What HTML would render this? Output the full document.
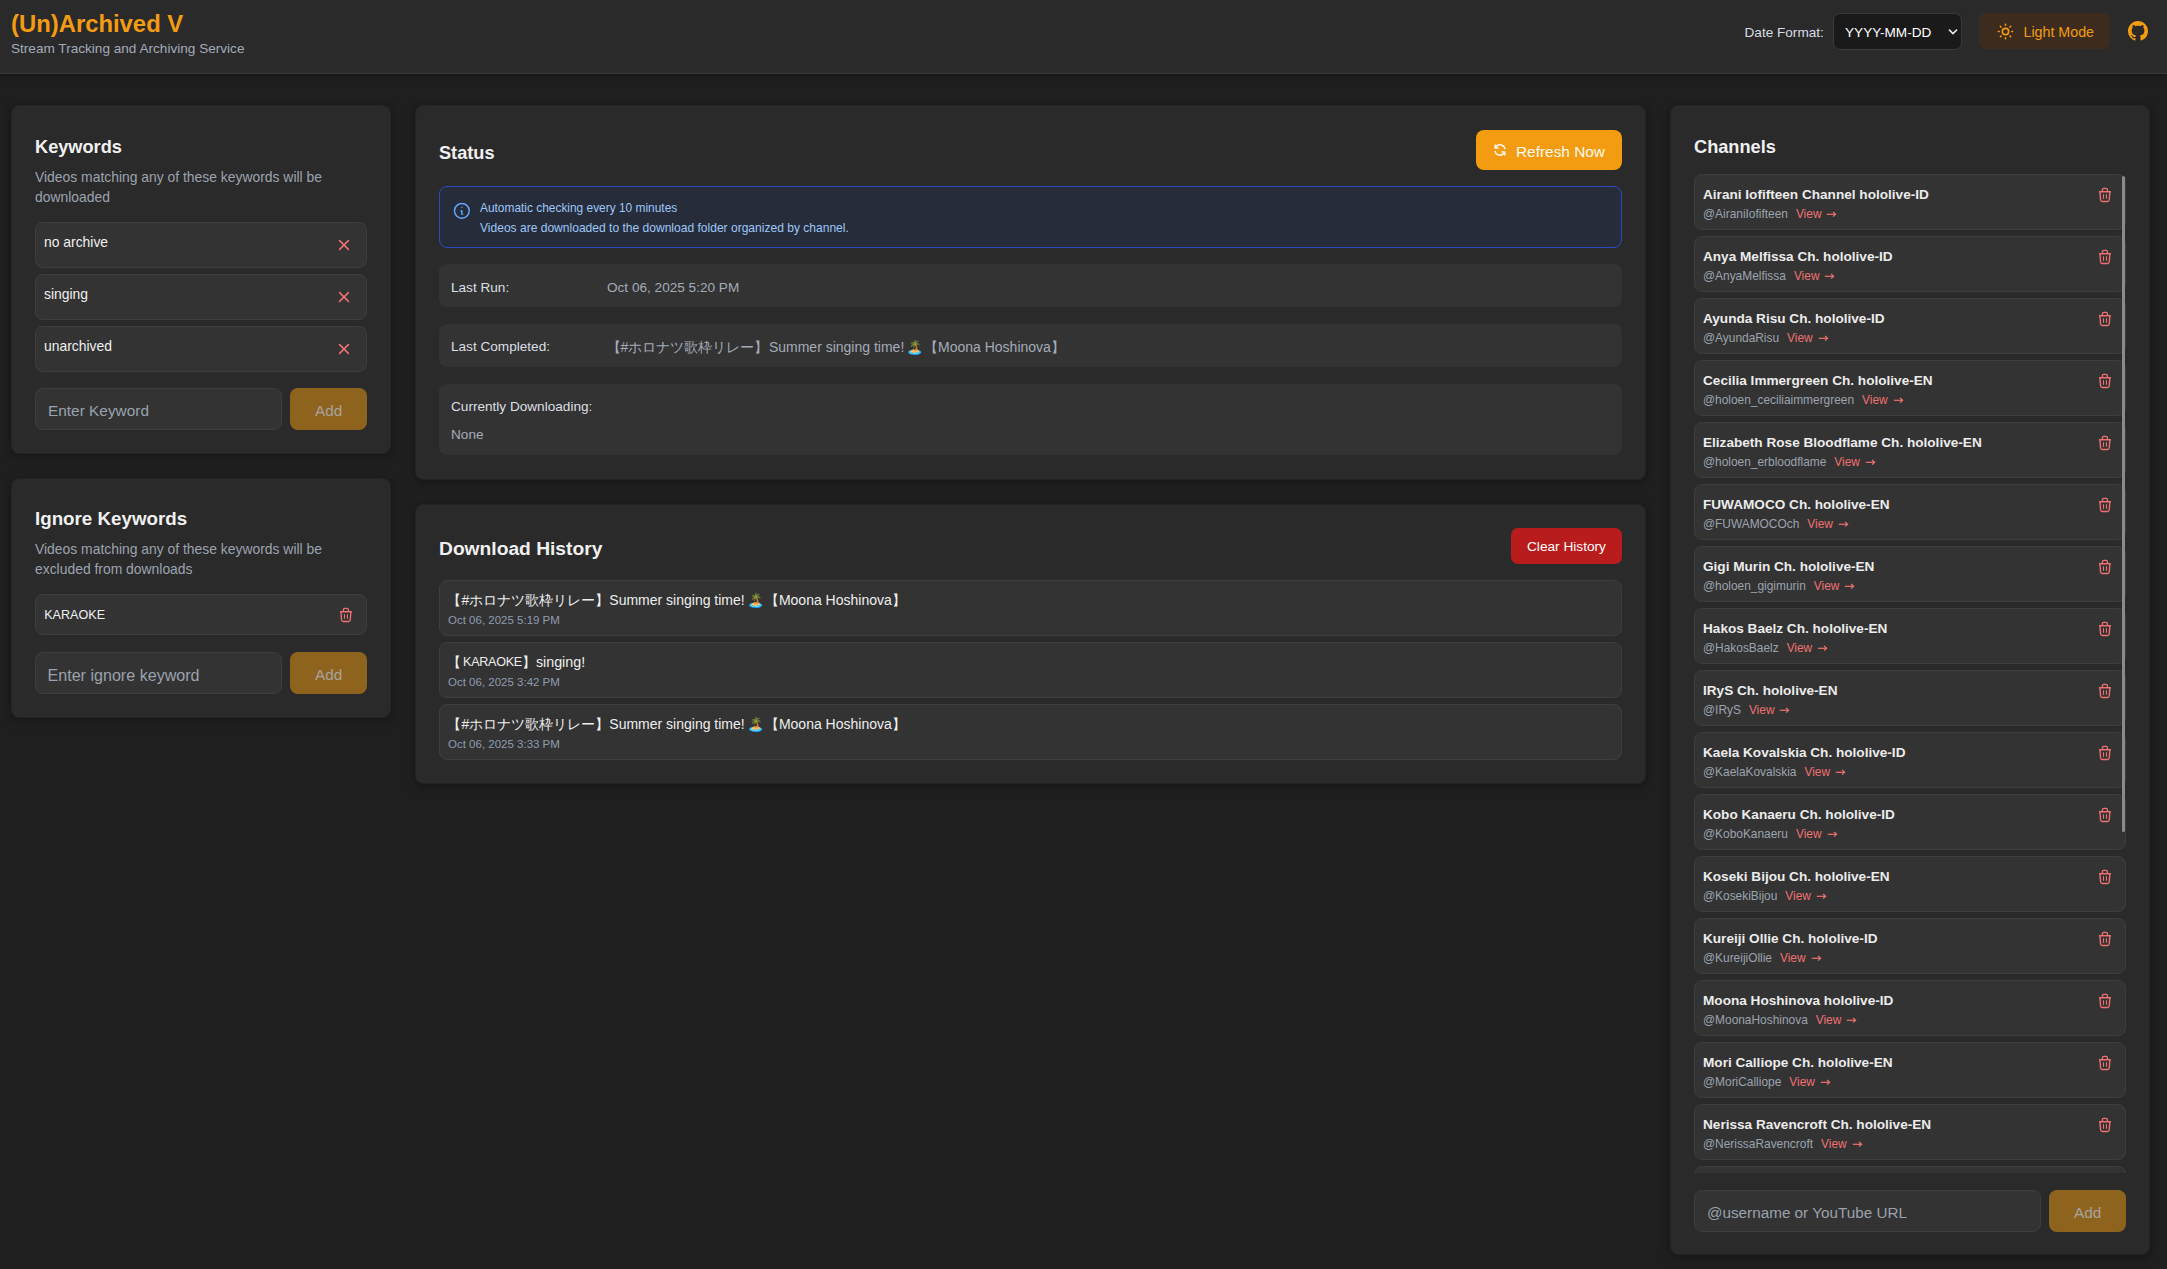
<!DOCTYPE html>
<html><head><meta charset="utf-8"><title>(Un)Archived V</title>
<style>
html,body{margin:0;padding:0;}
body{width:2167px;height:1269px;overflow:hidden;background:#1f1f1f;position:relative;font-family:"Liberation Sans", sans-serif;}
.t{position:absolute;white-space:nowrap;}
.ib{display:inline-block;overflow:hidden;vertical-align:top;white-space:nowrap;}
</style></head><body>
<div style="position:absolute;left:0px;top:0px;width:2167px;height:74px;box-sizing:border-box;background:#2a2a2a;border-bottom:1px solid #3a3a3a;box-shadow:0 2px 4px rgba(0,0,0,0.35);"></div>
<div class="t" style="left:11.0px;top:12.11px;font-size:23.85px;line-height:23.85px;color:#f39c12;font-weight:bold;">(Un)Archived V</div>
<div class="t" style="left:11.0px;top:42.19px;font-size:13.6px;line-height:13.6px;color:#a3abb8;font-weight:normal;">Stream Tracking and Archiving Service</div>
<div class="t" style="left:1744.5px;top:26.49px;font-size:13.6px;line-height:13.6px;color:#d8dce2;font-weight:normal;">Date Format:</div>
<div style="position:absolute;left:1833px;top:13px;width:129px;height:37px;box-sizing:border-box;background:#1a1a1a;border:1px solid #3a3a3a;border-radius:7px;"></div>
<div class="t" style="left:1845.0px;top:26.49px;font-size:13.6px;line-height:13.6px;color:#ffffff;font-weight:normal;">YYYY-MM-DD</div>
<svg style="position:absolute;left:1947px;top:28px" width="12" height="8" viewBox="0 0 12 8"><path d="M2 1.6L6 5.6L10 1.6" stroke="#e8e8e8" stroke-width="1.6" fill="none"/></svg>
<div style="position:absolute;left:1979px;top:13px;width:131px;height:36px;box-sizing:border-box;background:#3d2c1e;border-radius:7px;"></div>
<svg style="position:absolute;left:1995.5px;top:21.5px" width="19" height="19" viewBox="0 0 24 24" fill="none" stroke="#f39c12" stroke-width="2" stroke-linecap="round"><circle cx="12" cy="12" r="4"/><path d="M3 12h1m8-9v1m8 8h1m-9 8v1m-6.4-15.4l.7.7m12.1-.7l-.7.7m0 11.4l.7.7m-12.1-.7l-.7.7"/></svg>
<div class="t" style="left:2023.5px;top:25.44px;font-size:14.25px;line-height:14.25px;color:#f39c12;font-weight:normal;">Light Mode</div>
<svg style="position:absolute;left:2128px;top:21px" width="20" height="20" viewBox="0 0 16 16"><path fill="#f39c12" d="M8 0C3.58 0 0 3.58 0 8c0 3.54 2.29 6.53 5.47 7.59.4.07.55-.17.55-.38 0-.19-.01-.82-.01-1.49-2.01.37-2.53-.49-2.69-.94-.09-.23-.48-.94-.82-1.13-.28-.15-.68-.52-.01-.53.63-.01 1.08.58 1.23.82.72 1.21 1.87.87 2.33.66.07-.52.28-.87.51-1.07-1.78-.2-3.64-.89-3.64-3.95 0-.87.31-1.59.82-2.15-.08-.2-.36-1.02.08-2.12 0 0 .67-.21 2.2.82.64-.18 1.32-.27 2-.27.68 0 1.36.09 2 .27 1.53-1.04 2.2-.82 2.2-.82.44 1.1.16 1.92.08 2.12.51.56.82 1.27.82 2.15 0 3.07-1.87 3.75-3.65 3.95.29.25.54.73.54 1.48 0 1.07-.01 1.93-.01 2.2 0 .21.15.46.55.38A8.013 8.013 0 0016 8c0-4.42-3.58-8-8-8z"/></svg>
<div style="position:absolute;left:11px;top:105px;width:380px;height:349px;box-sizing:border-box;background:#2a2a2a;border:1px solid #242424;border-radius:8px;box-shadow:0 2px 8px rgba(0,0,0,0.35);"></div>
<div class="t" style="left:35.0px;top:138.09px;font-size:18.2px;line-height:18.2px;color:#f0f0f0;font-weight:bold;">Keywords</div>
<div class="t" style="left:35.0px;top:170.83px;font-size:13.9px;line-height:13.9px;color:#9ca3af;font-weight:normal;">Videos matching any of these keywords will be</div>
<div class="t" style="left:35.0px;top:190.73px;font-size:13.9px;line-height:13.9px;color:#9ca3af;font-weight:normal;">downloaded</div>
<div style="position:absolute;left:35px;top:222px;width:332px;height:46px;box-sizing:border-box;background:#333333;border:1px solid #3e3e3e;border-radius:8px;"></div>
<div class="t" style="left:44.0px;top:236.03px;font-size:13.9px;line-height:13.9px;color:#f0f0f0;font-weight:normal;">no archive</div>
<svg style="position:absolute;left:338px;top:238.8px" width="12" height="12" viewBox="0 0 12 12"><path d="M1.6 1.6L10.4 10.4M10.4 1.6L1.6 10.4" stroke="#f07171" stroke-width="1.5" fill="none" stroke-linecap="round"/></svg>
<div style="position:absolute;left:35px;top:274px;width:332px;height:46px;box-sizing:border-box;background:#333333;border:1px solid #3e3e3e;border-radius:8px;"></div>
<div class="t" style="left:44.0px;top:288.03px;font-size:13.9px;line-height:13.9px;color:#f0f0f0;font-weight:normal;">singing</div>
<svg style="position:absolute;left:338px;top:290.8px" width="12" height="12" viewBox="0 0 12 12"><path d="M1.6 1.6L10.4 10.4M10.4 1.6L1.6 10.4" stroke="#f07171" stroke-width="1.5" fill="none" stroke-linecap="round"/></svg>
<div style="position:absolute;left:35px;top:326px;width:332px;height:46px;box-sizing:border-box;background:#333333;border:1px solid #3e3e3e;border-radius:8px;"></div>
<div class="t" style="left:44.0px;top:340.03px;font-size:13.9px;line-height:13.9px;color:#f0f0f0;font-weight:normal;">unarchived</div>
<svg style="position:absolute;left:338px;top:342.8px" width="12" height="12" viewBox="0 0 12 12"><path d="M1.6 1.6L10.4 10.4M10.4 1.6L1.6 10.4" stroke="#f07171" stroke-width="1.5" fill="none" stroke-linecap="round"/></svg>
<div style="position:absolute;left:35px;top:388px;width:247px;height:42px;box-sizing:border-box;background:#333333;border:1px solid #3e3e3e;border-radius:8px;"></div>
<div class="t" style="left:48.0px;top:403.06px;font-size:15.4px;line-height:15.4px;color:#9aa2ad;font-weight:normal;">Enter Keyword</div>
<div style="position:absolute;left:290px;top:388px;width:77px;height:42px;box-sizing:border-box;background:#8e631e;border-radius:8px;"></div>
<div class="t" style="left:315.0px;top:402.86px;font-size:15.4px;line-height:15.4px;color:#a8a49c;font-weight:normal;">Add</div>
<div style="position:absolute;left:11px;top:478px;width:380px;height:240px;box-sizing:border-box;background:#2a2a2a;border:1px solid #242424;border-radius:8px;box-shadow:0 2px 8px rgba(0,0,0,0.35);"></div>
<div class="t" style="left:35.0px;top:509.72px;font-size:18.76px;line-height:18.76px;color:#f0f0f0;font-weight:bold;">Ignore Keywords</div>
<div class="t" style="left:35.0px;top:543.43px;font-size:13.9px;line-height:13.9px;color:#9ca3af;font-weight:normal;">Videos matching any of these keywords will be</div>
<div class="t" style="left:35.0px;top:563.03px;font-size:13.9px;line-height:13.9px;color:#9ca3af;font-weight:normal;">excluded from downloads</div>
<div style="position:absolute;left:35px;top:594px;width:332px;height:41px;box-sizing:border-box;background:#333333;border:1px solid #3e3e3e;border-radius:8px;"></div>
<div class="t" style="left:44.2px;top:608.63px;font-size:12.6px;line-height:12.6px;color:#f0f0f0;font-weight:normal;">KARAOKE</div>
<svg style="position:absolute;left:336px;top:604px" width="20" height="22" viewBox="0 0 20 22"><path d="M7.45 7.2V5.6a1.3 1.3 0 0 1 1.3-1.3h2.3a1.3 1.3 0 0 1 1.3 1.3V7.2" stroke="#f07171" stroke-width="1.3" fill="none"/><path d="M4.5 7.7H15.4" stroke="#f07171" stroke-width="1.35" fill="none" stroke-linecap="round"/><path d="M4.9 7.9L5.6 16.0a1.7 1.7 0 0 0 1.7 1.5h5.2a1.7 1.7 0 0 0 1.7-1.5L14.9 7.9" stroke="#f07171" stroke-width="1.35" fill="none"/><path d="M8.5 10.2V14.8M11.45 10.2V14.8" stroke="#f07171" stroke-width="1.1" fill="none"/></svg>
<div style="position:absolute;left:35px;top:652px;width:247px;height:42px;box-sizing:border-box;background:#333333;border:1px solid #3e3e3e;border-radius:8px;"></div>
<div class="t" style="left:47.5px;top:666.97px;font-size:16.1px;line-height:16.1px;color:#9aa2ad;font-weight:normal;">Enter ignore keyword</div>
<div style="position:absolute;left:290px;top:652px;width:77px;height:42px;box-sizing:border-box;background:#8e631e;border-radius:8px;"></div>
<div class="t" style="left:315.0px;top:667.06px;font-size:15.4px;line-height:15.4px;color:#a8a49c;font-weight:normal;">Add</div>
<div style="position:absolute;left:415px;top:105px;width:1231px;height:375px;box-sizing:border-box;background:#2a2a2a;border:1px solid #242424;border-radius:8px;box-shadow:0 2px 8px rgba(0,0,0,0.35);"></div>
<div class="t" style="left:439.0px;top:143.63px;font-size:18.16px;line-height:18.16px;color:#f0f0f0;font-weight:bold;">Status</div>
<div style="position:absolute;left:1476px;top:130px;width:146px;height:40px;box-sizing:border-box;background:#f39c12;border-radius:8px;"></div>
<svg style="position:absolute;left:1493px;top:143px" width="14" height="14" viewBox="0 0 14 14"><path d="M12 6.2A5 5 0 0 0 2.6 4.6M2 7.8a5 5 0 0 0 9.4 1.6" stroke="#fff8ee" stroke-width="1.5" fill="none"/><path d="M2.2 1.6V5H5.6M11.8 12.4V9H8.4" stroke="#fff8ee" stroke-width="1.5" fill="none"/></svg>
<div class="t" style="left:1516.0px;top:143.96px;font-size:15.4px;line-height:15.4px;color:#fffaf0;font-weight:normal;">Refresh Now</div>
<div style="position:absolute;left:439px;top:186px;width:1183px;height:62px;box-sizing:border-box;background:#272c3b;border:1px solid #2c4ac0;border-radius:8px;"></div>
<svg style="position:absolute;left:452.05px;top:201.05px" width="19.7" height="19.7" viewBox="0 0 24 24" fill="none" stroke="#60a5fa" stroke-width="1.8" stroke-linecap="round" stroke-linejoin="round"><circle cx="12" cy="12" r="9"/><path d="M12 8h.01"/><path d="M11 12h1v4h1"/></svg>
<div class="t" style="left:480.0px;top:202.91px;font-size:11.92px;line-height:11.92px;color:#9cc7f7;font-weight:normal;">Automatic checking every 10 minutes</div>
<div class="t" style="left:480.0px;top:222.10px;font-size:12.05px;line-height:12.05px;color:#9cc7f7;font-weight:normal;">Videos are downloaded to the download folder organized by channel.</div>
<div style="position:absolute;left:439px;top:264px;width:1183px;height:43px;box-sizing:border-box;background:#333333;border-radius:8px;"></div>
<div class="t" style="left:451.0px;top:280.69px;font-size:13.6px;line-height:13.6px;color:#dcdfe4;font-weight:normal;">Last Run:</div>
<div class="t" style="left:607.0px;top:280.69px;font-size:13.6px;line-height:13.6px;color:#a3abb8;font-weight:normal;">Oct 06, 2025 5:20 PM</div>
<div style="position:absolute;left:439px;top:324px;width:1183px;height:43px;box-sizing:border-box;background:#333333;border-radius:8px;"></div>
<div class="t" style="left:451.0px;top:340.29px;font-size:13.6px;line-height:13.6px;color:#dcdfe4;font-weight:normal;">Last Completed:</div>
<div class="t" style="left:606.5px;top:339.95px;font-size:14px;line-height:14px;color:#a3abb8;">【#ホロナツ歌枠リレー】</div>
<div class="t" style="left:768.9px;top:339.95px;font-size:14px;line-height:14px;color:#a3abb8;">Summer singing time!</div>
<div class="t" style="left:905.9px;top:339.95px;font-size:14px;line-height:14px;color:#a3abb8;">🏝️</div>
<div class="t" style="left:924.0px;top:339.95px;font-size:14px;line-height:14px;color:#a3abb8;">【Moona Hoshinova】</div>
<div style="position:absolute;left:439px;top:384px;width:1183px;height:71px;box-sizing:border-box;background:#333333;border-radius:8px;"></div>
<div class="t" style="left:451.0px;top:399.89px;font-size:13.6px;line-height:13.6px;color:#dcdfe4;font-weight:normal;">Currently Downloading:</div>
<div class="t" style="left:451.0px;top:427.99px;font-size:13.6px;line-height:13.6px;color:#a3abb8;font-weight:normal;">None</div>
<div style="position:absolute;left:415px;top:504px;width:1231px;height:280px;box-sizing:border-box;background:#2a2a2a;border:1px solid #242424;border-radius:8px;box-shadow:0 2px 8px rgba(0,0,0,0.35);"></div>
<div class="t" style="left:439.0px;top:538.52px;font-size:19.23px;line-height:19.23px;color:#f0f0f0;font-weight:bold;">Download History</div>
<div style="position:absolute;left:1511px;top:528px;width:111px;height:36px;box-sizing:border-box;background:#b91c1c;border-radius:7px;"></div>
<div class="t" style="left:1527.0px;top:540.43px;font-size:13.67px;line-height:13.67px;color:#ffffff;font-weight:normal;">Clear History</div>
<div style="position:absolute;left:439px;top:580px;width:1183px;height:56px;box-sizing:border-box;background:#333333;border:1px solid #3e3e3e;border-radius:8px;"></div>
<div class="t" style="left:447.4px;top:593.25px;font-size:14px;line-height:14px;color:#eeeeee;">【#ホロナツ歌枠リレー】</div>
<div class="t" style="left:609.3px;top:593.25px;font-size:14px;line-height:14px;color:#eeeeee;">Summer singing time!</div>
<div class="t" style="left:747.1px;top:593.25px;font-size:14px;line-height:14px;color:#eeeeee;">🏝️</div>
<div class="t" style="left:764.9px;top:593.25px;font-size:14px;line-height:14px;color:#eeeeee;">【Moona Hoshinova】</div>
<div class="t" style="left:448.0px;top:614.56px;font-size:11.51px;line-height:11.51px;color:#8f9cb0;font-weight:normal;">Oct 06, 2025 5:19 PM</div>
<div style="position:absolute;left:439px;top:642px;width:1183px;height:56px;box-sizing:border-box;background:#333333;border:1px solid #3e3e3e;border-radius:8px;"></div>
<div class="t" style="left:447.0px;top:655.25px;font-size:14px;line-height:14px;color:#eeeeee;">【</div>
<div class="t" style="left:463.1px;top:656.43px;font-size:12.6px;line-height:12.6px;color:#eeeeee;font-weight:normal;letter-spacing:-0.3px">KARAOKE</div>
<div class="t" style="left:521.5px;top:655.25px;font-size:14px;line-height:14px;color:#eeeeee;">】</div>
<div class="t" style="left:535.9px;top:655.00px;font-size:14.3px;line-height:14.3px;color:#eeeeee;">singing!</div>
<div class="t" style="left:448.0px;top:676.56px;font-size:11.51px;line-height:11.51px;color:#8f9cb0;font-weight:normal;">Oct 06, 2025 3:42 PM</div>
<div style="position:absolute;left:439px;top:704px;width:1183px;height:56px;box-sizing:border-box;background:#333333;border:1px solid #3e3e3e;border-radius:8px;"></div>
<div class="t" style="left:447.4px;top:717.25px;font-size:14px;line-height:14px;color:#eeeeee;">【#ホロナツ歌枠リレー】</div>
<div class="t" style="left:609.3px;top:717.25px;font-size:14px;line-height:14px;color:#eeeeee;">Summer singing time!</div>
<div class="t" style="left:747.1px;top:717.25px;font-size:14px;line-height:14px;color:#eeeeee;">🏝️</div>
<div class="t" style="left:764.9px;top:717.25px;font-size:14px;line-height:14px;color:#eeeeee;">【Moona Hoshinova】</div>
<div class="t" style="left:448.0px;top:738.56px;font-size:11.51px;line-height:11.51px;color:#8f9cb0;font-weight:normal;">Oct 06, 2025 3:33 PM</div>
<div style="position:absolute;left:1670px;top:105px;width:480px;height:1150px;box-sizing:border-box;background:#2a2a2a;border:1px solid #242424;border-radius:8px;box-shadow:0 2px 8px rgba(0,0,0,0.35);"></div>
<div class="t" style="left:1694.0px;top:137.88px;font-size:18.22px;line-height:18.22px;color:#f0f0f0;font-weight:bold;">Channels</div>
<div style="position:absolute;left:1694px;top:174px;width:432px;height:999px;overflow:hidden;">
<div style="position:absolute;left:0;top:0px;width:432px;height:56px;box-sizing:border-box;background:#333333;border:1px solid #3e3e3e;border-radius:8px;"><div class="t" style="left:8px;top:12.69px;font-size:13.6px;line-height:13.6px;color:#ececec;font-weight:bold">Airani Iofifteen Channel hololive-ID</div><div class="t" style="left:8px;top:33.91px;font-size:11.92px;line-height:11.92px;color:#9ca3af">@AiraniIofifteen<span style="color:#f07171;margin-left:8px">View<svg style="margin-left:5px;vertical-align:baseline" width="11" height="7" viewBox="0 0 11 7"><path d="M0.8 3.3H9.3" stroke="#f07171" stroke-width="1.2"/><path d="M7.1 1.0L9.6 3.3L7.1 5.6" stroke="#f07171" stroke-width="1.2" fill="none"/></svg></span></div></div>
<div style="position:absolute;left:0;top:62px;width:432px;height:56px;box-sizing:border-box;background:#333333;border:1px solid #3e3e3e;border-radius:8px;"><div class="t" style="left:8px;top:12.69px;font-size:13.6px;line-height:13.6px;color:#ececec;font-weight:bold">Anya Melfissa Ch. hololive-ID</div><div class="t" style="left:8px;top:33.91px;font-size:11.92px;line-height:11.92px;color:#9ca3af">@AnyaMelfissa<span style="color:#f07171;margin-left:8px">View<svg style="margin-left:5px;vertical-align:baseline" width="11" height="7" viewBox="0 0 11 7"><path d="M0.8 3.3H9.3" stroke="#f07171" stroke-width="1.2"/><path d="M7.1 1.0L9.6 3.3L7.1 5.6" stroke="#f07171" stroke-width="1.2" fill="none"/></svg></span></div></div>
<div style="position:absolute;left:0;top:124px;width:432px;height:56px;box-sizing:border-box;background:#333333;border:1px solid #3e3e3e;border-radius:8px;"><div class="t" style="left:8px;top:12.69px;font-size:13.6px;line-height:13.6px;color:#ececec;font-weight:bold">Ayunda Risu Ch. hololive-ID</div><div class="t" style="left:8px;top:33.91px;font-size:11.92px;line-height:11.92px;color:#9ca3af">@AyundaRisu<span style="color:#f07171;margin-left:8px">View<svg style="margin-left:5px;vertical-align:baseline" width="11" height="7" viewBox="0 0 11 7"><path d="M0.8 3.3H9.3" stroke="#f07171" stroke-width="1.2"/><path d="M7.1 1.0L9.6 3.3L7.1 5.6" stroke="#f07171" stroke-width="1.2" fill="none"/></svg></span></div></div>
<div style="position:absolute;left:0;top:186px;width:432px;height:56px;box-sizing:border-box;background:#333333;border:1px solid #3e3e3e;border-radius:8px;"><div class="t" style="left:8px;top:12.69px;font-size:13.6px;line-height:13.6px;color:#ececec;font-weight:bold">Cecilia Immergreen Ch. hololive-EN</div><div class="t" style="left:8px;top:33.91px;font-size:11.92px;line-height:11.92px;color:#9ca3af">@holoen_ceciliaimmergreen<span style="color:#f07171;margin-left:8px">View<svg style="margin-left:5px;vertical-align:baseline" width="11" height="7" viewBox="0 0 11 7"><path d="M0.8 3.3H9.3" stroke="#f07171" stroke-width="1.2"/><path d="M7.1 1.0L9.6 3.3L7.1 5.6" stroke="#f07171" stroke-width="1.2" fill="none"/></svg></span></div></div>
<div style="position:absolute;left:0;top:248px;width:432px;height:56px;box-sizing:border-box;background:#333333;border:1px solid #3e3e3e;border-radius:8px;"><div class="t" style="left:8px;top:12.69px;font-size:13.6px;line-height:13.6px;color:#ececec;font-weight:bold">Elizabeth Rose Bloodflame Ch. hololive-EN</div><div class="t" style="left:8px;top:33.91px;font-size:11.92px;line-height:11.92px;color:#9ca3af">@holoen_erbloodflame<span style="color:#f07171;margin-left:8px">View<svg style="margin-left:5px;vertical-align:baseline" width="11" height="7" viewBox="0 0 11 7"><path d="M0.8 3.3H9.3" stroke="#f07171" stroke-width="1.2"/><path d="M7.1 1.0L9.6 3.3L7.1 5.6" stroke="#f07171" stroke-width="1.2" fill="none"/></svg></span></div></div>
<div style="position:absolute;left:0;top:310px;width:432px;height:56px;box-sizing:border-box;background:#333333;border:1px solid #3e3e3e;border-radius:8px;"><div class="t" style="left:8px;top:12.69px;font-size:13.6px;line-height:13.6px;color:#ececec;font-weight:bold">FUWAMOCO Ch. hololive-EN</div><div class="t" style="left:8px;top:33.91px;font-size:11.92px;line-height:11.92px;color:#9ca3af">@FUWAMOCOch<span style="color:#f07171;margin-left:8px">View<svg style="margin-left:5px;vertical-align:baseline" width="11" height="7" viewBox="0 0 11 7"><path d="M0.8 3.3H9.3" stroke="#f07171" stroke-width="1.2"/><path d="M7.1 1.0L9.6 3.3L7.1 5.6" stroke="#f07171" stroke-width="1.2" fill="none"/></svg></span></div></div>
<div style="position:absolute;left:0;top:372px;width:432px;height:56px;box-sizing:border-box;background:#333333;border:1px solid #3e3e3e;border-radius:8px;"><div class="t" style="left:8px;top:12.69px;font-size:13.6px;line-height:13.6px;color:#ececec;font-weight:bold">Gigi Murin Ch. hololive-EN</div><div class="t" style="left:8px;top:33.91px;font-size:11.92px;line-height:11.92px;color:#9ca3af">@holoen_gigimurin<span style="color:#f07171;margin-left:8px">View<svg style="margin-left:5px;vertical-align:baseline" width="11" height="7" viewBox="0 0 11 7"><path d="M0.8 3.3H9.3" stroke="#f07171" stroke-width="1.2"/><path d="M7.1 1.0L9.6 3.3L7.1 5.6" stroke="#f07171" stroke-width="1.2" fill="none"/></svg></span></div></div>
<div style="position:absolute;left:0;top:434px;width:432px;height:56px;box-sizing:border-box;background:#333333;border:1px solid #3e3e3e;border-radius:8px;"><div class="t" style="left:8px;top:12.69px;font-size:13.6px;line-height:13.6px;color:#ececec;font-weight:bold">Hakos Baelz Ch. hololive-EN</div><div class="t" style="left:8px;top:33.91px;font-size:11.92px;line-height:11.92px;color:#9ca3af">@HakosBaelz<span style="color:#f07171;margin-left:8px">View<svg style="margin-left:5px;vertical-align:baseline" width="11" height="7" viewBox="0 0 11 7"><path d="M0.8 3.3H9.3" stroke="#f07171" stroke-width="1.2"/><path d="M7.1 1.0L9.6 3.3L7.1 5.6" stroke="#f07171" stroke-width="1.2" fill="none"/></svg></span></div></div>
<div style="position:absolute;left:0;top:496px;width:432px;height:56px;box-sizing:border-box;background:#333333;border:1px solid #3e3e3e;border-radius:8px;"><div class="t" style="left:8px;top:12.69px;font-size:13.6px;line-height:13.6px;color:#ececec;font-weight:bold">IRyS Ch. hololive-EN</div><div class="t" style="left:8px;top:33.91px;font-size:11.92px;line-height:11.92px;color:#9ca3af">@IRyS<span style="color:#f07171;margin-left:8px">View<svg style="margin-left:5px;vertical-align:baseline" width="11" height="7" viewBox="0 0 11 7"><path d="M0.8 3.3H9.3" stroke="#f07171" stroke-width="1.2"/><path d="M7.1 1.0L9.6 3.3L7.1 5.6" stroke="#f07171" stroke-width="1.2" fill="none"/></svg></span></div></div>
<div style="position:absolute;left:0;top:558px;width:432px;height:56px;box-sizing:border-box;background:#333333;border:1px solid #3e3e3e;border-radius:8px;"><div class="t" style="left:8px;top:12.69px;font-size:13.6px;line-height:13.6px;color:#ececec;font-weight:bold">Kaela Kovalskia Ch. hololive-ID</div><div class="t" style="left:8px;top:33.91px;font-size:11.92px;line-height:11.92px;color:#9ca3af">@KaelaKovalskia<span style="color:#f07171;margin-left:8px">View<svg style="margin-left:5px;vertical-align:baseline" width="11" height="7" viewBox="0 0 11 7"><path d="M0.8 3.3H9.3" stroke="#f07171" stroke-width="1.2"/><path d="M7.1 1.0L9.6 3.3L7.1 5.6" stroke="#f07171" stroke-width="1.2" fill="none"/></svg></span></div></div>
<div style="position:absolute;left:0;top:620px;width:432px;height:56px;box-sizing:border-box;background:#333333;border:1px solid #3e3e3e;border-radius:8px;"><div class="t" style="left:8px;top:12.69px;font-size:13.6px;line-height:13.6px;color:#ececec;font-weight:bold">Kobo Kanaeru Ch. hololive-ID</div><div class="t" style="left:8px;top:33.91px;font-size:11.92px;line-height:11.92px;color:#9ca3af">@KoboKanaeru<span style="color:#f07171;margin-left:8px">View<svg style="margin-left:5px;vertical-align:baseline" width="11" height="7" viewBox="0 0 11 7"><path d="M0.8 3.3H9.3" stroke="#f07171" stroke-width="1.2"/><path d="M7.1 1.0L9.6 3.3L7.1 5.6" stroke="#f07171" stroke-width="1.2" fill="none"/></svg></span></div></div>
<div style="position:absolute;left:0;top:682px;width:432px;height:56px;box-sizing:border-box;background:#333333;border:1px solid #3e3e3e;border-radius:8px;"><div class="t" style="left:8px;top:12.69px;font-size:13.6px;line-height:13.6px;color:#ececec;font-weight:bold">Koseki Bijou Ch. hololive-EN</div><div class="t" style="left:8px;top:33.91px;font-size:11.92px;line-height:11.92px;color:#9ca3af">@KosekiBijou<span style="color:#f07171;margin-left:8px">View<svg style="margin-left:5px;vertical-align:baseline" width="11" height="7" viewBox="0 0 11 7"><path d="M0.8 3.3H9.3" stroke="#f07171" stroke-width="1.2"/><path d="M7.1 1.0L9.6 3.3L7.1 5.6" stroke="#f07171" stroke-width="1.2" fill="none"/></svg></span></div></div>
<div style="position:absolute;left:0;top:744px;width:432px;height:56px;box-sizing:border-box;background:#333333;border:1px solid #3e3e3e;border-radius:8px;"><div class="t" style="left:8px;top:12.69px;font-size:13.6px;line-height:13.6px;color:#ececec;font-weight:bold">Kureiji Ollie Ch. hololive-ID</div><div class="t" style="left:8px;top:33.91px;font-size:11.92px;line-height:11.92px;color:#9ca3af">@KureijiOllie<span style="color:#f07171;margin-left:8px">View<svg style="margin-left:5px;vertical-align:baseline" width="11" height="7" viewBox="0 0 11 7"><path d="M0.8 3.3H9.3" stroke="#f07171" stroke-width="1.2"/><path d="M7.1 1.0L9.6 3.3L7.1 5.6" stroke="#f07171" stroke-width="1.2" fill="none"/></svg></span></div></div>
<div style="position:absolute;left:0;top:806px;width:432px;height:56px;box-sizing:border-box;background:#333333;border:1px solid #3e3e3e;border-radius:8px;"><div class="t" style="left:8px;top:12.69px;font-size:13.6px;line-height:13.6px;color:#ececec;font-weight:bold">Moona Hoshinova hololive-ID</div><div class="t" style="left:8px;top:33.91px;font-size:11.92px;line-height:11.92px;color:#9ca3af">@MoonaHoshinova<span style="color:#f07171;margin-left:8px">View<svg style="margin-left:5px;vertical-align:baseline" width="11" height="7" viewBox="0 0 11 7"><path d="M0.8 3.3H9.3" stroke="#f07171" stroke-width="1.2"/><path d="M7.1 1.0L9.6 3.3L7.1 5.6" stroke="#f07171" stroke-width="1.2" fill="none"/></svg></span></div></div>
<div style="position:absolute;left:0;top:868px;width:432px;height:56px;box-sizing:border-box;background:#333333;border:1px solid #3e3e3e;border-radius:8px;"><div class="t" style="left:8px;top:12.69px;font-size:13.6px;line-height:13.6px;color:#ececec;font-weight:bold">Mori Calliope Ch. hololive-EN</div><div class="t" style="left:8px;top:33.91px;font-size:11.92px;line-height:11.92px;color:#9ca3af">@MoriCalliope<span style="color:#f07171;margin-left:8px">View<svg style="margin-left:5px;vertical-align:baseline" width="11" height="7" viewBox="0 0 11 7"><path d="M0.8 3.3H9.3" stroke="#f07171" stroke-width="1.2"/><path d="M7.1 1.0L9.6 3.3L7.1 5.6" stroke="#f07171" stroke-width="1.2" fill="none"/></svg></span></div></div>
<div style="position:absolute;left:0;top:930px;width:432px;height:56px;box-sizing:border-box;background:#333333;border:1px solid #3e3e3e;border-radius:8px;"><div class="t" style="left:8px;top:12.69px;font-size:13.6px;line-height:13.6px;color:#ececec;font-weight:bold">Nerissa Ravencroft Ch. hololive-EN</div><div class="t" style="left:8px;top:33.91px;font-size:11.92px;line-height:11.92px;color:#9ca3af">@NerissaRavencroft<span style="color:#f07171;margin-left:8px">View<svg style="margin-left:5px;vertical-align:baseline" width="11" height="7" viewBox="0 0 11 7"><path d="M0.8 3.3H9.3" stroke="#f07171" stroke-width="1.2"/><path d="M7.1 1.0L9.6 3.3L7.1 5.6" stroke="#f07171" stroke-width="1.2" fill="none"/></svg></span></div></div>
<div style="position:absolute;left:0;top:992px;width:432px;height:56px;box-sizing:border-box;background:#333333;border:1px solid #3e3e3e;border-radius:8px;"><div class="t" style="left:8px;top:12.69px;font-size:13.6px;line-height:13.6px;color:#ececec;font-weight:bold">Ouro Kronii Ch. hololive-EN</div><div class="t" style="left:8px;top:33.91px;font-size:11.92px;line-height:11.92px;color:#9ca3af">@OuroKronii<span style="color:#f07171;margin-left:8px">View<svg style="margin-left:5px;vertical-align:baseline" width="11" height="7" viewBox="0 0 11 7"><path d="M0.8 3.3H9.3" stroke="#f07171" stroke-width="1.2"/><path d="M7.1 1.0L9.6 3.3L7.1 5.6" stroke="#f07171" stroke-width="1.2" fill="none"/></svg></span></div></div>
</div>
<svg style="position:absolute;left:2095px;top:184px" width="20" height="22" viewBox="0 0 20 22"><path d="M7.45 7.2V5.6a1.3 1.3 0 0 1 1.3-1.3h2.3a1.3 1.3 0 0 1 1.3 1.3V7.2" stroke="#f07171" stroke-width="1.3" fill="none"/><path d="M4.5 7.7H15.4" stroke="#f07171" stroke-width="1.35" fill="none" stroke-linecap="round"/><path d="M4.9 7.9L5.6 16.0a1.7 1.7 0 0 0 1.7 1.5h5.2a1.7 1.7 0 0 0 1.7-1.5L14.9 7.9" stroke="#f07171" stroke-width="1.35" fill="none"/><path d="M8.5 10.2V14.8M11.45 10.2V14.8" stroke="#f07171" stroke-width="1.1" fill="none"/></svg>
<svg style="position:absolute;left:2095px;top:246px" width="20" height="22" viewBox="0 0 20 22"><path d="M7.45 7.2V5.6a1.3 1.3 0 0 1 1.3-1.3h2.3a1.3 1.3 0 0 1 1.3 1.3V7.2" stroke="#f07171" stroke-width="1.3" fill="none"/><path d="M4.5 7.7H15.4" stroke="#f07171" stroke-width="1.35" fill="none" stroke-linecap="round"/><path d="M4.9 7.9L5.6 16.0a1.7 1.7 0 0 0 1.7 1.5h5.2a1.7 1.7 0 0 0 1.7-1.5L14.9 7.9" stroke="#f07171" stroke-width="1.35" fill="none"/><path d="M8.5 10.2V14.8M11.45 10.2V14.8" stroke="#f07171" stroke-width="1.1" fill="none"/></svg>
<svg style="position:absolute;left:2095px;top:308px" width="20" height="22" viewBox="0 0 20 22"><path d="M7.45 7.2V5.6a1.3 1.3 0 0 1 1.3-1.3h2.3a1.3 1.3 0 0 1 1.3 1.3V7.2" stroke="#f07171" stroke-width="1.3" fill="none"/><path d="M4.5 7.7H15.4" stroke="#f07171" stroke-width="1.35" fill="none" stroke-linecap="round"/><path d="M4.9 7.9L5.6 16.0a1.7 1.7 0 0 0 1.7 1.5h5.2a1.7 1.7 0 0 0 1.7-1.5L14.9 7.9" stroke="#f07171" stroke-width="1.35" fill="none"/><path d="M8.5 10.2V14.8M11.45 10.2V14.8" stroke="#f07171" stroke-width="1.1" fill="none"/></svg>
<svg style="position:absolute;left:2095px;top:370px" width="20" height="22" viewBox="0 0 20 22"><path d="M7.45 7.2V5.6a1.3 1.3 0 0 1 1.3-1.3h2.3a1.3 1.3 0 0 1 1.3 1.3V7.2" stroke="#f07171" stroke-width="1.3" fill="none"/><path d="M4.5 7.7H15.4" stroke="#f07171" stroke-width="1.35" fill="none" stroke-linecap="round"/><path d="M4.9 7.9L5.6 16.0a1.7 1.7 0 0 0 1.7 1.5h5.2a1.7 1.7 0 0 0 1.7-1.5L14.9 7.9" stroke="#f07171" stroke-width="1.35" fill="none"/><path d="M8.5 10.2V14.8M11.45 10.2V14.8" stroke="#f07171" stroke-width="1.1" fill="none"/></svg>
<svg style="position:absolute;left:2095px;top:432px" width="20" height="22" viewBox="0 0 20 22"><path d="M7.45 7.2V5.6a1.3 1.3 0 0 1 1.3-1.3h2.3a1.3 1.3 0 0 1 1.3 1.3V7.2" stroke="#f07171" stroke-width="1.3" fill="none"/><path d="M4.5 7.7H15.4" stroke="#f07171" stroke-width="1.35" fill="none" stroke-linecap="round"/><path d="M4.9 7.9L5.6 16.0a1.7 1.7 0 0 0 1.7 1.5h5.2a1.7 1.7 0 0 0 1.7-1.5L14.9 7.9" stroke="#f07171" stroke-width="1.35" fill="none"/><path d="M8.5 10.2V14.8M11.45 10.2V14.8" stroke="#f07171" stroke-width="1.1" fill="none"/></svg>
<svg style="position:absolute;left:2095px;top:494px" width="20" height="22" viewBox="0 0 20 22"><path d="M7.45 7.2V5.6a1.3 1.3 0 0 1 1.3-1.3h2.3a1.3 1.3 0 0 1 1.3 1.3V7.2" stroke="#f07171" stroke-width="1.3" fill="none"/><path d="M4.5 7.7H15.4" stroke="#f07171" stroke-width="1.35" fill="none" stroke-linecap="round"/><path d="M4.9 7.9L5.6 16.0a1.7 1.7 0 0 0 1.7 1.5h5.2a1.7 1.7 0 0 0 1.7-1.5L14.9 7.9" stroke="#f07171" stroke-width="1.35" fill="none"/><path d="M8.5 10.2V14.8M11.45 10.2V14.8" stroke="#f07171" stroke-width="1.1" fill="none"/></svg>
<svg style="position:absolute;left:2095px;top:556px" width="20" height="22" viewBox="0 0 20 22"><path d="M7.45 7.2V5.6a1.3 1.3 0 0 1 1.3-1.3h2.3a1.3 1.3 0 0 1 1.3 1.3V7.2" stroke="#f07171" stroke-width="1.3" fill="none"/><path d="M4.5 7.7H15.4" stroke="#f07171" stroke-width="1.35" fill="none" stroke-linecap="round"/><path d="M4.9 7.9L5.6 16.0a1.7 1.7 0 0 0 1.7 1.5h5.2a1.7 1.7 0 0 0 1.7-1.5L14.9 7.9" stroke="#f07171" stroke-width="1.35" fill="none"/><path d="M8.5 10.2V14.8M11.45 10.2V14.8" stroke="#f07171" stroke-width="1.1" fill="none"/></svg>
<svg style="position:absolute;left:2095px;top:618px" width="20" height="22" viewBox="0 0 20 22"><path d="M7.45 7.2V5.6a1.3 1.3 0 0 1 1.3-1.3h2.3a1.3 1.3 0 0 1 1.3 1.3V7.2" stroke="#f07171" stroke-width="1.3" fill="none"/><path d="M4.5 7.7H15.4" stroke="#f07171" stroke-width="1.35" fill="none" stroke-linecap="round"/><path d="M4.9 7.9L5.6 16.0a1.7 1.7 0 0 0 1.7 1.5h5.2a1.7 1.7 0 0 0 1.7-1.5L14.9 7.9" stroke="#f07171" stroke-width="1.35" fill="none"/><path d="M8.5 10.2V14.8M11.45 10.2V14.8" stroke="#f07171" stroke-width="1.1" fill="none"/></svg>
<svg style="position:absolute;left:2095px;top:680px" width="20" height="22" viewBox="0 0 20 22"><path d="M7.45 7.2V5.6a1.3 1.3 0 0 1 1.3-1.3h2.3a1.3 1.3 0 0 1 1.3 1.3V7.2" stroke="#f07171" stroke-width="1.3" fill="none"/><path d="M4.5 7.7H15.4" stroke="#f07171" stroke-width="1.35" fill="none" stroke-linecap="round"/><path d="M4.9 7.9L5.6 16.0a1.7 1.7 0 0 0 1.7 1.5h5.2a1.7 1.7 0 0 0 1.7-1.5L14.9 7.9" stroke="#f07171" stroke-width="1.35" fill="none"/><path d="M8.5 10.2V14.8M11.45 10.2V14.8" stroke="#f07171" stroke-width="1.1" fill="none"/></svg>
<svg style="position:absolute;left:2095px;top:742px" width="20" height="22" viewBox="0 0 20 22"><path d="M7.45 7.2V5.6a1.3 1.3 0 0 1 1.3-1.3h2.3a1.3 1.3 0 0 1 1.3 1.3V7.2" stroke="#f07171" stroke-width="1.3" fill="none"/><path d="M4.5 7.7H15.4" stroke="#f07171" stroke-width="1.35" fill="none" stroke-linecap="round"/><path d="M4.9 7.9L5.6 16.0a1.7 1.7 0 0 0 1.7 1.5h5.2a1.7 1.7 0 0 0 1.7-1.5L14.9 7.9" stroke="#f07171" stroke-width="1.35" fill="none"/><path d="M8.5 10.2V14.8M11.45 10.2V14.8" stroke="#f07171" stroke-width="1.1" fill="none"/></svg>
<svg style="position:absolute;left:2095px;top:804px" width="20" height="22" viewBox="0 0 20 22"><path d="M7.45 7.2V5.6a1.3 1.3 0 0 1 1.3-1.3h2.3a1.3 1.3 0 0 1 1.3 1.3V7.2" stroke="#f07171" stroke-width="1.3" fill="none"/><path d="M4.5 7.7H15.4" stroke="#f07171" stroke-width="1.35" fill="none" stroke-linecap="round"/><path d="M4.9 7.9L5.6 16.0a1.7 1.7 0 0 0 1.7 1.5h5.2a1.7 1.7 0 0 0 1.7-1.5L14.9 7.9" stroke="#f07171" stroke-width="1.35" fill="none"/><path d="M8.5 10.2V14.8M11.45 10.2V14.8" stroke="#f07171" stroke-width="1.1" fill="none"/></svg>
<svg style="position:absolute;left:2095px;top:866px" width="20" height="22" viewBox="0 0 20 22"><path d="M7.45 7.2V5.6a1.3 1.3 0 0 1 1.3-1.3h2.3a1.3 1.3 0 0 1 1.3 1.3V7.2" stroke="#f07171" stroke-width="1.3" fill="none"/><path d="M4.5 7.7H15.4" stroke="#f07171" stroke-width="1.35" fill="none" stroke-linecap="round"/><path d="M4.9 7.9L5.6 16.0a1.7 1.7 0 0 0 1.7 1.5h5.2a1.7 1.7 0 0 0 1.7-1.5L14.9 7.9" stroke="#f07171" stroke-width="1.35" fill="none"/><path d="M8.5 10.2V14.8M11.45 10.2V14.8" stroke="#f07171" stroke-width="1.1" fill="none"/></svg>
<svg style="position:absolute;left:2095px;top:928px" width="20" height="22" viewBox="0 0 20 22"><path d="M7.45 7.2V5.6a1.3 1.3 0 0 1 1.3-1.3h2.3a1.3 1.3 0 0 1 1.3 1.3V7.2" stroke="#f07171" stroke-width="1.3" fill="none"/><path d="M4.5 7.7H15.4" stroke="#f07171" stroke-width="1.35" fill="none" stroke-linecap="round"/><path d="M4.9 7.9L5.6 16.0a1.7 1.7 0 0 0 1.7 1.5h5.2a1.7 1.7 0 0 0 1.7-1.5L14.9 7.9" stroke="#f07171" stroke-width="1.35" fill="none"/><path d="M8.5 10.2V14.8M11.45 10.2V14.8" stroke="#f07171" stroke-width="1.1" fill="none"/></svg>
<svg style="position:absolute;left:2095px;top:990px" width="20" height="22" viewBox="0 0 20 22"><path d="M7.45 7.2V5.6a1.3 1.3 0 0 1 1.3-1.3h2.3a1.3 1.3 0 0 1 1.3 1.3V7.2" stroke="#f07171" stroke-width="1.3" fill="none"/><path d="M4.5 7.7H15.4" stroke="#f07171" stroke-width="1.35" fill="none" stroke-linecap="round"/><path d="M4.9 7.9L5.6 16.0a1.7 1.7 0 0 0 1.7 1.5h5.2a1.7 1.7 0 0 0 1.7-1.5L14.9 7.9" stroke="#f07171" stroke-width="1.35" fill="none"/><path d="M8.5 10.2V14.8M11.45 10.2V14.8" stroke="#f07171" stroke-width="1.1" fill="none"/></svg>
<svg style="position:absolute;left:2095px;top:1052px" width="20" height="22" viewBox="0 0 20 22"><path d="M7.45 7.2V5.6a1.3 1.3 0 0 1 1.3-1.3h2.3a1.3 1.3 0 0 1 1.3 1.3V7.2" stroke="#f07171" stroke-width="1.3" fill="none"/><path d="M4.5 7.7H15.4" stroke="#f07171" stroke-width="1.35" fill="none" stroke-linecap="round"/><path d="M4.9 7.9L5.6 16.0a1.7 1.7 0 0 0 1.7 1.5h5.2a1.7 1.7 0 0 0 1.7-1.5L14.9 7.9" stroke="#f07171" stroke-width="1.35" fill="none"/><path d="M8.5 10.2V14.8M11.45 10.2V14.8" stroke="#f07171" stroke-width="1.1" fill="none"/></svg>
<svg style="position:absolute;left:2095px;top:1114px" width="20" height="22" viewBox="0 0 20 22"><path d="M7.45 7.2V5.6a1.3 1.3 0 0 1 1.3-1.3h2.3a1.3 1.3 0 0 1 1.3 1.3V7.2" stroke="#f07171" stroke-width="1.3" fill="none"/><path d="M4.5 7.7H15.4" stroke="#f07171" stroke-width="1.35" fill="none" stroke-linecap="round"/><path d="M4.9 7.9L5.6 16.0a1.7 1.7 0 0 0 1.7 1.5h5.2a1.7 1.7 0 0 0 1.7-1.5L14.9 7.9" stroke="#f07171" stroke-width="1.35" fill="none"/><path d="M8.5 10.2V14.8M11.45 10.2V14.8" stroke="#f07171" stroke-width="1.1" fill="none"/></svg>
<div style="position:absolute;left:2122px;top:176px;width:3px;height:656px;box-sizing:border-box;background:#8a8a8a;border-radius:2px;"></div>
<div style="position:absolute;left:1694px;top:1190px;width:347px;height:42px;box-sizing:border-box;background:#333333;border:1px solid #3e3e3e;border-radius:8px;"></div>
<div class="t" style="left:1707.0px;top:1205.27px;font-size:15.27px;line-height:15.27px;color:#9aa2ad;font-weight:normal;">@username or YouTube URL</div>
<div style="position:absolute;left:2049px;top:1190px;width:77px;height:42px;box-sizing:border-box;background:#8e631e;border-radius:8px;"></div>
<div class="t" style="left:2074.0px;top:1205.16px;font-size:15.4px;line-height:15.4px;color:#a8a49c;font-weight:normal;">Add</div>
</body></html>
